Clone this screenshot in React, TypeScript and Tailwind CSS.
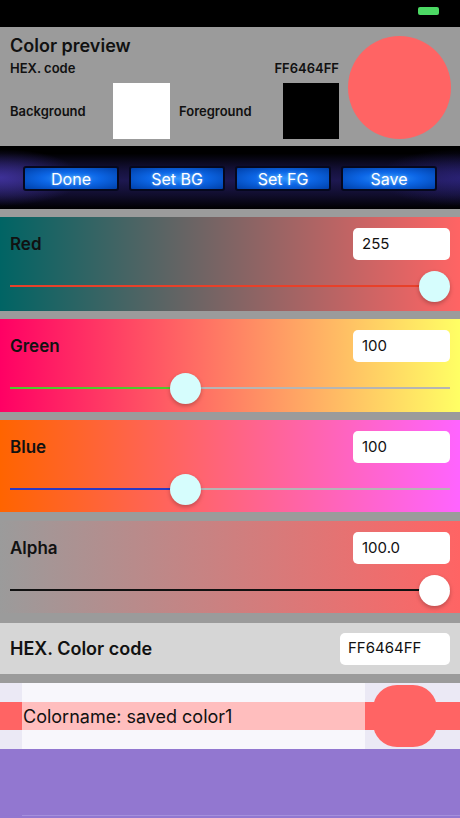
import React from "react";

type SliderRowProps = {
  label: string;
  value: string;
  pct: number;
  bg: string;
  fill: string;
  rest: string;
  thumb: string;
  h: string;
};

function SliderRow({ label, value, pct, bg, fill, rest, thumb, h }: SliderRowProps) {
  // thumb is 31px, track runs the full 440px width
  const left = pct * (440 - 31);
  return (
    <div className={`${bg} ${h} px-[10px] pt-[11px]`}>
      <div className="flex h-[32px] items-center justify-between">
        <span className="mt-[2px] text-[17px] font-semibold text-[#111]">{label}</span>
        <div className="flex h-[32px] w-[97px] items-center rounded-[5px] bg-white pl-[9px] text-[15px] text-[#111]">
          {value}
        </div>
      </div>
      <div className="relative mt-[11px] h-[31px]">
        <div className={`absolute left-0 right-0 top-[14px] h-[2px] ${rest}`} />
        <div
          className={`absolute left-0 top-[14px] h-[2px] ${fill}`}
          style={{ width: left + 15 }}
        />
        <div
          className={`absolute top-0 h-[31px] w-[31px] rounded-full ${thumb} shadow-[0_2px_4px_rgba(0,0,0,0.25)]`}
          style={{ left }}
        />
      </div>
    </div>
  );
}

function BarButton({ children }: { children: React.ReactNode }) {
  return (
    <button
      className="
        h-[25px] w-[96px]
        rounded-[3px] border-2 border-[#06081e]
        bg-[radial-gradient(ellipse_at_center,#2f95ff_0%,#0c66e6_45%,#0040a8_100%)]
        text-[16px] font-normal leading-none text-white
        [text-shadow:0_0_3px_rgba(180,220,255,0.6)]
      "
    >
      {children}
    </button>
  );
}

export default function App() {
  return (
    <div className="flex h-[818px] w-[460px] flex-col overflow-hidden bg-[#9b9b9b] font-['Inter','Liberation_Sans',sans-serif]">
      {/* Status bar */}
      <div className="flex h-[27px] shrink-0 items-start justify-end bg-black pr-[21px] pt-[7px]">
        <div className="h-[8px] w-[21px] rounded-[2px] bg-[#4cd964]" />
      </div>

      {/* Color preview */}
      <div className="flex h-[119px] shrink-0 bg-[#9b9b9b] pl-[10px] pr-[9px]">
        <div className="w-[329px] pt-[6px]">
          <div className="h-[26px] text-[18px] font-semibold leading-[26px] text-[#111]">
            Color preview
          </div>
          <div className="mt-[1px] flex h-[18px] items-center justify-between text-[13px] font-semibold text-[#111]">
            <span>HEX. code</span>
            <span>FF6464FF</span>
          </div>
          <div className="mt-[5px] flex h-[56px] items-center">
            <span className="mt-[2px] w-[103px] text-[13px] font-semibold text-[#111]">Background</span>
            <div className="h-[56px] w-[57px] bg-white" />
            <span className="ml-[9px] mt-[2px] w-[104px] text-[13px] font-semibold text-[#111]">Foreground</span>
            <div className="h-[56px] w-[56px] bg-black" />
          </div>
        </div>
        <div className="ml-[9px] mt-[9px] h-[103px] w-[103px] rounded-full bg-[#ff6464]" />
      </div>

      {/* Button bar */}
      <div className="flex h-[63px] shrink-0 items-center gap-[10px] bg-[radial-gradient(ellipse_18%_45%_at_0%_50%,rgba(70,55,170,0.8),transparent),radial-gradient(ellipse_18%_45%_at_100%_50%,rgba(50,40,140,0.6),transparent),linear-gradient(to_bottom,#000_0%,#000_12%,#16123e_40%,#1d1850_55%,#100d2c_78%,#000_100%)] pl-[23px] pt-[2px]">
        <BarButton>Done</BarButton>
        <BarButton>Set BG</BarButton>
        <BarButton>Set FG</BarButton>
        <BarButton>Save</BarButton>
      </div>

      <div className="mt-[8px] flex flex-col gap-[8px]">
        <SliderRow
          label="Red"
          value="255"
          pct={1}
          h="h-[94px]"
          bg="bg-[linear-gradient(to_right,#006464,#ff6464)]"
          fill="bg-[#e8402a]"
          rest="bg-[#b5b5b5]"
          thumb="bg-[#d6fdfd]"
        />
        <SliderRow
          label="Green"
          value="100"
          pct={100 / 255}
          h="h-[93px]"
          bg="bg-[linear-gradient(to_right,#ff0064,#ffff64)]"
          fill="bg-[#4dc92c]"
          rest="bg-[#b5b5b5]"
          thumb="bg-[#d6fdfd]"
        />
        <SliderRow
          label="Blue"
          value="100"
          pct={100 / 255}
          h="h-[92px]"
          bg="bg-[linear-gradient(to_right,#ff6400,#ff64ff)]"
          fill="bg-[#2a38c4]"
          rest="bg-[#b5b5b5]"
          thumb="bg-[#d6fdfd]"
        />
      </div>

      <div className="mt-[9px]">
        <SliderRow
          label="Alpha"
          value="100.0"
          pct={1}
          h="h-[92px]"
          bg="bg-[linear-gradient(to_right,#9b9b9b,#ff6464)]"
          fill="bg-[#111]"
          rest="bg-[#111]"
          thumb="bg-white"
        />
      </div>

      {/* HEX code */}
      <div className="mt-[10px] flex h-[51px] shrink-0 items-center justify-between bg-[#d6d6d6] px-[10px]">
        <span className="text-[18px] font-semibold text-[#111]">HEX. Color code</span>
        <div className="flex h-[32px] w-[110px] items-center rounded-[5px] bg-white pl-[8px] text-[15px] text-[#111]">
          FF6464FF
        </div>
      </div>

      {/* Saved colour */}
      <div className="mt-[9px] flex h-[66px] shrink-0 bg-[#ebe9f5]">
        <div className="flex w-[22px] items-center">
          <div className="h-[28px] w-full bg-[#ff6464]" />
        </div>
        <div className="flex w-[343px] items-center bg-[#f8f7fc]">
          <div className="flex h-[28px] w-full items-center bg-[#ffbebe] pl-[1px] text-[18px] text-[#111]">
            Colorname: saved color1
          </div>
        </div>
        <div className="relative flex flex-1 items-center">
          <div className="h-[28px] w-full bg-[#ff6464]" />
          <div className="absolute left-[8px] top-[2px] h-[62px] w-[64px] rounded-[24px] bg-[#ff6464]" />
        </div>
      </div>

      {/* Empty area */}
      <div className="flex flex-1 flex-col justify-end bg-[#9277d0]">
        <div className="ml-[22px] h-[1px] bg-[#a590dc]" />
        <div className="h-[2px]" />
      </div>
    </div>
  );
}
